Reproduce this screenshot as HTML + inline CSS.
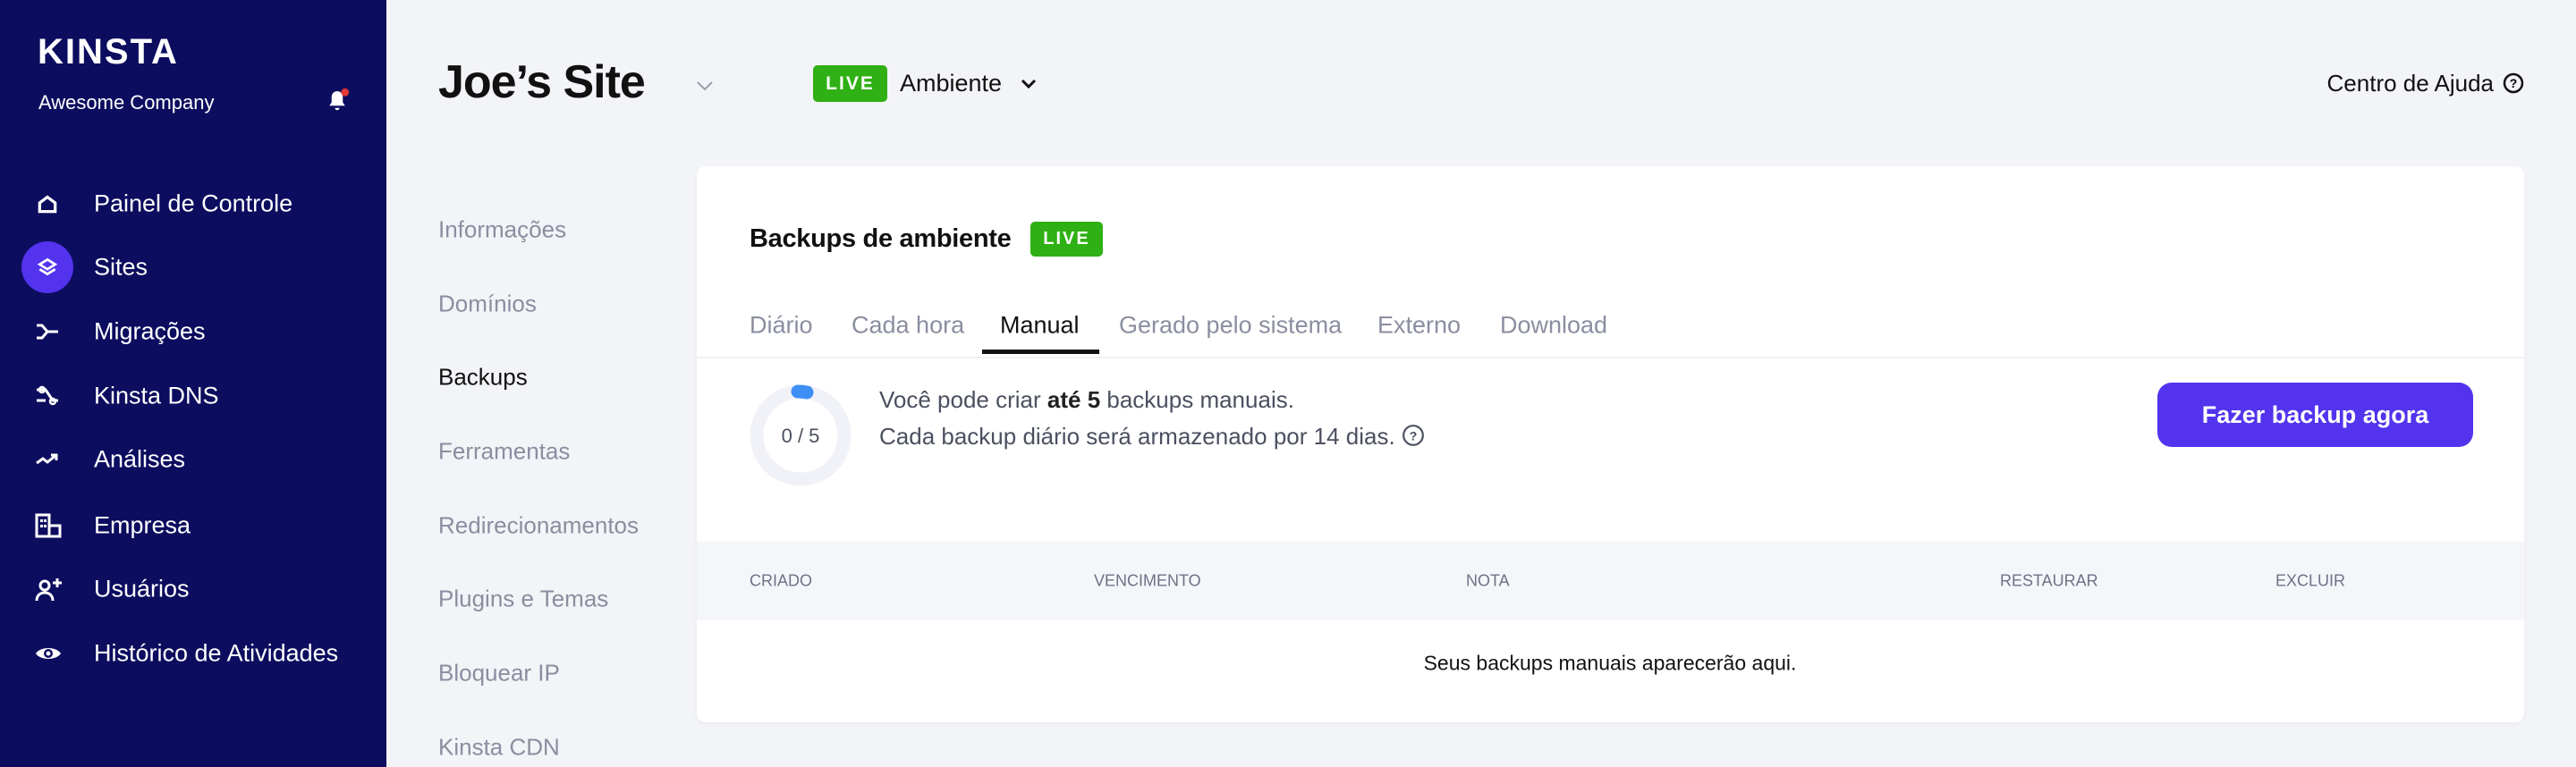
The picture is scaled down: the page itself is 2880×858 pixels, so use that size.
<!DOCTYPE html>
<html><head><meta charset="utf-8"><style>
*{margin:0;padding:0;box-sizing:border-box}
body{width:2880px;height:858px;overflow:hidden;background:#f3f4f8;font-family:"Liberation Sans",sans-serif;position:relative;color:#111}
.a{position:absolute;white-space:nowrap}
#sb{position:absolute;left:0;top:0;width:432px;height:858px;background:#0c0d5f}
.nav{position:absolute;left:105px;color:#fff;font-size:27px;transform:translateY(-50%)}
.ic{position:absolute;transform:translate(-50%,-50%)}
.sub{position:absolute;left:490px;font-size:26px;color:#8a8e9f;transform:translateY(-50%)}
.tab{position:absolute;top:364px;font-size:27px;color:#8a8e9f;transform:translateY(-50%)}
.th{position:absolute;top:650px;font-size:18px;color:#6e7286;transform:translateY(-50%)}
.live{position:absolute;background:#2fb014;color:#fff;font-weight:bold;border-radius:5px;display:flex;align-items:center;justify-content:center;letter-spacing:2px}
</style></head><body>
<div id="sb">
<div class="a" style="left:42px;top:36px;color:#fff;font-size:40px;font-weight:bold;letter-spacing:2px">KINSTA</div>
<div class="a" style="left:43px;top:102px;color:#fff;font-size:22px">Awesome Company</div>
<svg class="ic" style="left:377px;top:112px" width="30" height="30" viewBox="0 0 24 24"><path d="M12 4a5 5 0 0 0-5 5v5l-2 3h14l-2-3V9a5 5 0 0 0-5-5zM10 19a2 2 0 0 0 4 0z" fill="#fff"/><circle cx="19" cy="5" r="3.5" fill="#e53935"/></svg>
<div style="position:absolute;left:24px;top:270px;width:58px;height:58px;border-radius:50%;background:#5333ed"></div>
<svg class="ic" style="left:53px;top:228px" width="26" height="26" viewBox="0 0 24 24"><path d="M4 20V11l8-6 8 6v9z" fill="none" stroke="#fff" stroke-width="3"/></svg>
<svg class="ic" style="left:53px;top:299px" width="26" height="26" viewBox="0 0 24 24"><path d="M12 4l8 5-8 5-8-5z" fill="none" stroke="#fff" stroke-width="2.5"/><path d="M4 14l8 5 8-5" fill="none" stroke="#fff" stroke-width="2.5"/></svg>
<svg class="ic" style="left:53px;top:371px" width="28" height="26" viewBox="0 0 28 24"><path d="M2 5h6l6 7-6 7H2M14 12h12" fill="none" stroke="#fff" stroke-width="3"/></svg>
<svg class="ic" style="left:53px;top:443px" width="28" height="26" viewBox="0 0 28 24"><path d="M2 5h10l8 12h6M2 17h10" fill="none" stroke="#fff" stroke-width="3"/><circle cx="8" cy="5" r="3" fill="none" stroke="#fff" stroke-width="2.5"/><circle cx="20" cy="18" r="3" fill="none" stroke="#fff" stroke-width="2.5"/></svg>
<svg class="ic" style="left:53px;top:514px" width="28" height="22" viewBox="0 0 28 20"><path d="M2 14l7-5 5 4 10-8M18 5h6v6" fill="none" stroke="#fff" stroke-width="3"/></svg>
<svg class="ic" style="left:55px;top:588px" width="32" height="28" viewBox="0 0 32 28"><path d="M2 2h14v24H2zM16 14h12v12H16" fill="none" stroke="#fff" stroke-width="3"/><rect x="6" y="7" width="3" height="3" fill="#fff"/><rect x="10" y="7" width="3" height="3" fill="#fff"/><rect x="6" y="13" width="3" height="3" fill="#fff"/><rect x="10" y="13" width="3" height="3" fill="#fff"/></svg>
<svg class="ic" style="left:55px;top:659px" width="32" height="28" viewBox="0 0 32 28"><circle cx="11" cy="10" r="5" fill="none" stroke="#fff" stroke-width="3"/><path d="M2 27c0-6 4-9 9-9s9 3 9 9M25 2v10M20 7h10" fill="none" stroke="#fff" stroke-width="3"/></svg>
<svg class="ic" style="left:54px;top:731px" width="30" height="20" viewBox="0 0 30 20"><path d="M1 10C6 2 24 2 29 10 24 18 6 18 1 10z" fill="#fff"/><circle cx="15" cy="10" r="5" fill="#0c0d5f"/><circle cx="15" cy="10" r="2.5" fill="#fff"/></svg>
<div class="nav" style="top:228px">Painel de Controle</div>
<div class="nav" style="top:299px">Sites</div>
<div class="nav" style="top:371px">Migrações</div>
<div class="nav" style="top:443px">Kinsta DNS</div>
<div class="nav" style="top:514px">Análises</div>
<div class="nav" style="top:588px">Empresa</div>
<div class="nav" style="top:659px">Usuários</div>
<div class="nav" style="top:731px">Histórico de Atividades</div>
</div>
<div class="a" style="left:490px;top:62px;font-size:52px;font-weight:bold;letter-spacing:-1px">Joe’s Site</div>
<svg class="ic" style="left:788px;top:96px" width="20" height="12" viewBox="0 0 20 12"><path d="M2 2l8 8 8-8" fill="none" stroke="#9a9eae" stroke-width="2"/></svg>
<div class="live" style="left:909px;top:73px;width:83px;height:41px;font-size:21px">LIVE</div>
<div class="a" style="left:1006px;top:78px;font-size:27px">Ambiente</div>
<svg class="ic" style="left:1150px;top:94px" width="20" height="12" viewBox="0 0 20 12"><path d="M3 2l7 7 7-7" fill="none" stroke="#111" stroke-width="3"/></svg>
<div class="a" style="right:92px;top:78px;font-size:26px">Centro de Ajuda</div>
<svg class="ic" style="left:2810px;top:93px" width="24" height="24" viewBox="0 0 24 24"><circle cx="12" cy="12" r="10" fill="none" stroke="#111" stroke-width="2.5"/><text x="12" y="17" font-size="14" font-weight="bold" text-anchor="middle" font-family="Liberation Sans">?</text></svg>
<div class="sub" style="top:257px">Informações</div>
<div class="sub" style="top:340px">Domínios</div>
<div class="sub" style="top:422px;color:#111">Backups</div>
<div class="sub" style="top:505px">Ferramentas</div>
<div class="sub" style="top:588px">Redirecionamentos</div>
<div class="sub" style="top:670px">Plugins e Temas</div>
<div class="sub" style="top:753px">Bloquear IP</div>
<div class="sub" style="top:836px">Kinsta CDN</div>
<div style="position:absolute;left:779px;top:186px;width:2043px;height:622px;background:#fff;border-radius:10px;box-shadow:0 2px 6px rgba(0,0,0,.04);overflow:hidden">
<div style="position:absolute;left:0;top:420px;width:100%;height:88px;background:#f5f6fa"></div>
<div style="position:absolute;left:0;top:213px;width:100%;height:2px;background:#eef0f4"></div>
</div>
<div class="a" style="left:838px;top:251px;font-size:29px;font-weight:bold;letter-spacing:-0.3px">Backups de ambiente</div>
<div class="live" style="left:1152px;top:248px;width:81px;height:39px;font-size:20px">LIVE</div>
<div class="tab" style="left:838px">Diário</div>
<div class="tab" style="left:952px">Cada hora</div>
<div class="tab" style="left:1118px;color:#111">Manual</div>
<div class="tab" style="left:1251px">Gerado pelo sistema</div>
<div class="tab" style="left:1540px">Externo</div>
<div class="tab" style="left:1677px">Download</div>
<div style="position:absolute;left:1098px;top:391px;width:131px;height:5px;background:#111"></div>
<svg class="ic" style="left:895px;top:487px" width="120" height="120" viewBox="0 0 120 120"><circle cx="60" cy="60" r="49" fill="none" stroke="#f1f2f7" stroke-width="15"/><path d="M57 11a49 49 0 0 1 10 1" fill="none" stroke="#3d8ff5" stroke-width="15" stroke-linecap="round"/><text x="60" y="68" font-size="22" text-anchor="middle" fill="#4b5060" font-family="Liberation Sans">0 / 5</text></svg>
<div class="a" style="left:983px;top:432px;font-size:26px;color:#4b5060">Você pode criar <b style="color:#222">até 5</b> backups manuais.</div>
<div class="a" style="left:983px;top:473px;font-size:26px;color:#4b5060">Cada backup diário será armazenado por 14 dias.</div>
<svg class="ic" style="left:1580px;top:487px" width="26" height="26" viewBox="0 0 24 24"><circle cx="12" cy="12" r="10" fill="none" stroke="#4b5060" stroke-width="2"/><text x="12" y="17" font-size="13" font-weight="bold" text-anchor="middle" fill="#4b5060" font-family="Liberation Sans">?</text></svg>
<div style="position:absolute;left:2412px;top:428px;width:353px;height:72px;background:#5333ed;border-radius:16px;color:#fff;font-size:27px;font-weight:bold;display:flex;align-items:center;justify-content:center">Fazer backup agora</div>
<div class="th" style="left:838px">CRIADO</div>
<div class="th" style="left:1223px">VENCIMENTO</div>
<div class="th" style="left:1639px">NOTA</div>
<div class="th" style="left:2236px">RESTAURAR</div>
<div class="th" style="left:2544px">EXCLUIR</div>
<div class="a" style="left:1800px;top:742px;font-size:23px;transform:translate(-50%,-50%)">Seus backups manuais aparecerão aqui.</div>
</body></html>
